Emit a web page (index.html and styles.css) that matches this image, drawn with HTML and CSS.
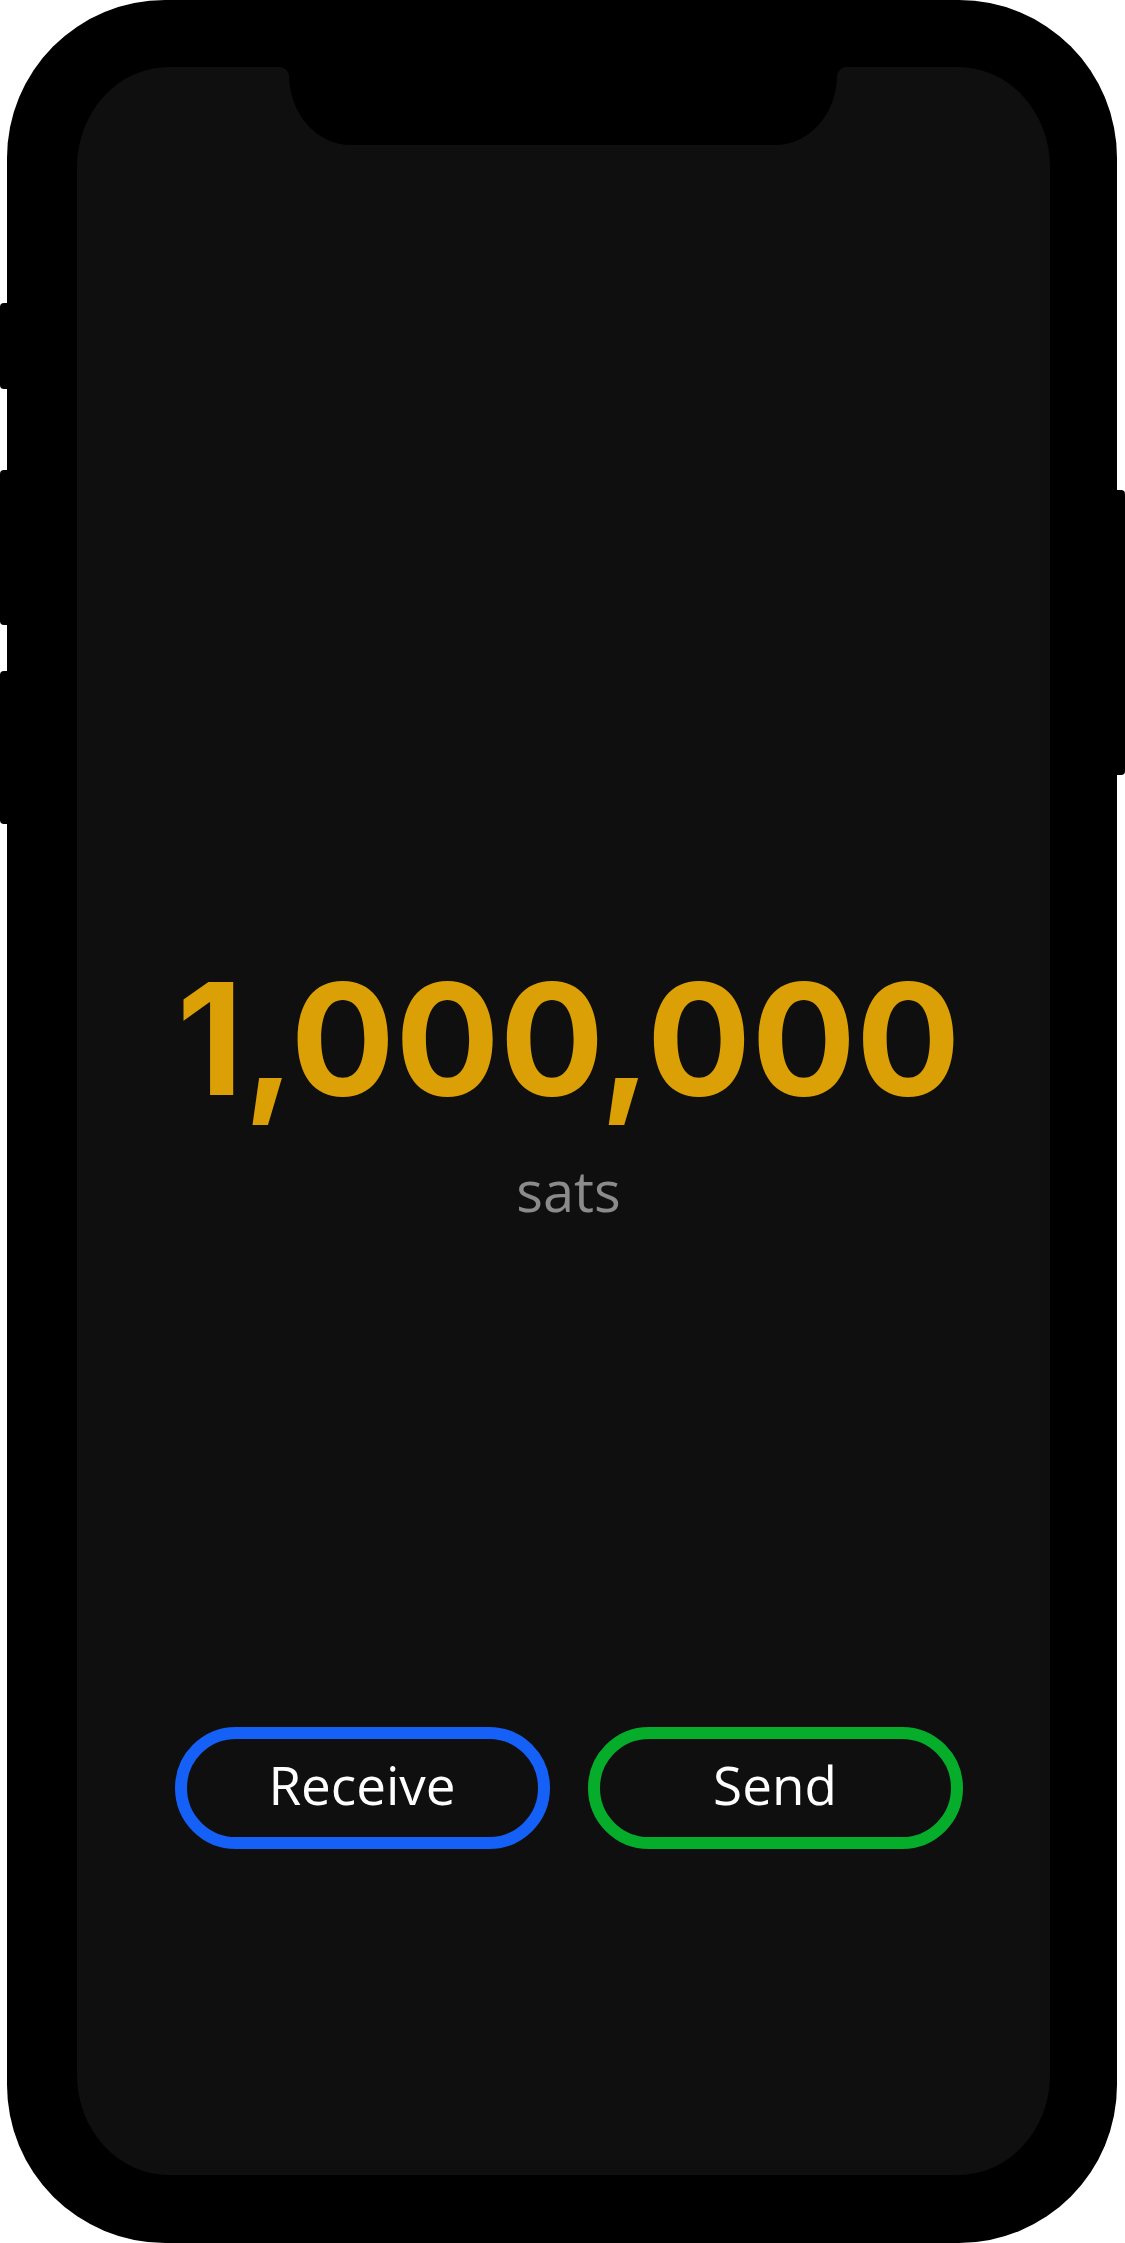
FILE: index.html
```html
<!DOCTYPE html>
<html lang="en">
<head>
<meta charset="utf-8">
<title>Wallet</title>
<link rel="stylesheet" href="styles.css">
</head>
<body>
<div class="phone">
  <span class="side-btn side-left btn-mute"></span>
  <span class="side-btn side-left btn-vol-up"></span>
  <span class="side-btn side-left btn-vol-down"></span>
  <span class="side-btn side-right btn-power"></span>
  <div class="screen">
    <div class="notch"></div>
    <main class="wallet">
      <div class="amount">1,000,000</div>
      <div class="unit">sats</div>
      <div class="actions">
        <button class="action action-receive">Receive</button>
        <button class="action action-send">Send</button>
      </div>
    </main>
  </div>
</div>
</body>
</html>
```

FILE: styles.css
```css
html, body {
  margin: 0;
  padding: 0;
  background: #ffffff;
}

body {
  width: 1125px;
  height: 2243px;
  overflow: hidden;
}

.phone {
  position: relative;
  margin-left: 7px;
  width: 1110px;
  height: 2243px;
  box-sizing: border-box;
  padding: 67px 67px 68px 70px;
  background: #000;
  border-radius: 158px;
}

.side-btn {
  position: absolute;
  width: 10px;
  background: #000;
}

.side-left {
  left: -7px;
  border-radius: 4px 0 0 4px;
}

.side-right {
  right: -8px;
  border-radius: 0 4px 4px 0;
}

.btn-mute { top: 303px; height: 86px; }
.btn-vol-up { top: 470px; height: 155px; }
.btn-vol-down { top: 671px; height: 153px; }
.btn-power { top: 490px; height: 285px; }

.screen {
  position: relative;
  height: 100%;
  box-sizing: border-box;
  background: #0f0f0f;
  border-radius: 92px / 100px;
  padding-left: 10px;
}

.notch {
  position: absolute;
  top: 0;
  left: 212px;
  width: 548px;
  height: 78px;
  background: #000;
  border-radius: 0 0 62px 62px / 0 0 70px 70px;
}

.notch::before,
.notch::after {
  content: "";
  position: absolute;
  top: 0;
  width: 10px;
  height: 10px;
}

.notch::before {
  left: -10px;
  background: radial-gradient(circle at 0 100%, rgba(0,0,0,0) 9.5px, #000 10.5px);
}

.notch::after {
  right: -10px;
  background: radial-gradient(circle at 100% 100%, rgba(0,0,0,0) 9.5px, #000 10.5px);
}

.wallet {
  display: flex;
  flex-direction: column;
  align-items: center;
  padding-top: 894px;
}

.amount {
  font-family: Inter, "Liberation Sans", sans-serif;
  font-weight: 700;
  font-size: 155px;
  line-height: 155px;
  letter-spacing: 0;
  color: #dba006;
  white-space: nowrap;
}

.unit {
  margin-top: 46px;
  font-family: "Open Sans", "Liberation Sans", sans-serif;
  font-size: 56px;
  line-height: 56px;
  color: #8b8b8b;
}

.actions {
  display: flex;
  gap: 38px;
  margin-top: 509px;
}

.action {
  display: flex;
  align-items: center;
  justify-content: center;
  width: 375px;
  height: 122px;
  box-sizing: border-box;
  padding: 0 0 7px 0;
  border: 12px solid;
  border-radius: 61px;
  background: transparent;
  color: #ffffff;
  font-family: "Open Sans", "Liberation Sans", sans-serif;
  font-size: 53px;
  line-height: 53px;
}

.action-receive { border-color: #1560f7; }
.action-send { border-color: #06ad2b; }
```
